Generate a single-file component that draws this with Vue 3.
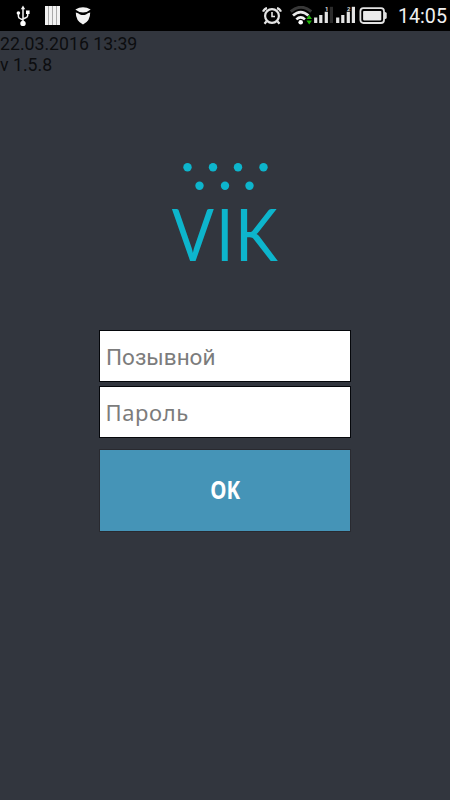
<script setup>
import { ref } from 'vue'

const callsign = ref('')
const password = ref('')
const topDots = [187.5, 213, 238, 263.5]
const bottomDots = [199.5, 225, 249.5]
const signals = [{ id: '1', dim: true }, { id: '2', dim: false }]
</script>

<template>
  <div class="screen">
    <header class="status">
      <svg class="usb" width="14" height="22" viewBox="0 0 14 22" fill="none" stroke="#f2f2f2" stroke-width="1.5">
        <path d="M7 3V18M2.4 9V11.2Q2.4 13 4.2 13.6L7 15M11.7 8V10.5Q11.7 12 9.8 12.8L7 14" />
        <path d="M7 .6L9.2 4.2H4.8Z" fill="#f2f2f2" stroke="none" />
        <circle cx="7" cy="18.4" r="2.7" fill="#fff" stroke="none" />
        <circle cx="2.4" cy="8" r="1.8" fill="#fff" stroke="none" />
        <rect x="10" y="5.5" width="3.6" height="3.5" fill="#fff" stroke="none" />
      </svg>
      <svg class="stripes" width="15" height="19" viewBox="0 0 15 19">
        <rect width="15" height="19" fill="#f2f2f2" />
        <path d="M3.5 0V19M7.5 0V19M11.5 0V19" stroke="#aaa" />
      </svg>
      <svg class="shield" width="16" height="18" viewBox="0 0 16 18" fill="#f2f2f2">
        <path d="M.3 2.6Q4 .3 8 .3T15.7 2.6Q13 5.2 8 5.5Q3 5.2 .3 2.6Z" />
        <path d="M.8 5.4Q3.3 6 5 7.4Q8 8.8 11 7.4Q12.7 6 15.2 5.4Q15.4 13.7 8 17.5Q.6 13.7 .8 5.4Z" />
      </svg>
      <span class="spacer"></span>
      <svg class="alarm" width="20" height="18" viewBox="0 0 20 18" fill="none" stroke="#e4e4e4">
        <circle cx="10" cy="9" r="6.9" stroke-width="2.2" />
        <path d="M10 5V9.5H13" stroke-width="1.6" />
        <path d="M1 4.7Q2.2 1.7 5 1.1M19 4.7Q17.8 1.7 15 1.1" stroke-width="2.2" />
        <path d="M4.6 14.2L2.5 16.8M15.4 14.2L17.5 16.8" stroke-width="2.2" />
      </svg>
      <svg class="wifi" width="22" height="19" viewBox="0 0 22 19" fill="none">
        <path d="M.8 5.6Q11 -3 21.2 5.6" stroke="#383838" stroke-width="3" />
        <path d="M3 9.5Q10.7 2.7 18.4 9.5" stroke="#e8e8e8" stroke-width="2.8" />
        <path d="M6.3 13.4Q10.7 9.4 15 13.4" stroke="#f2f2f2" stroke-width="2.5" />
        <circle cx="10.7" cy="16.2" r="2.3" fill="#fff" />
        <path d="M19.2 9L22 13H16.4ZM19.2 18.5L22 14.5H16.4Z" fill="#20b50a" />
      </svg>
      <svg v-for="s in signals" :key="s.id" class="signal" width="20" height="18" viewBox="0 0 20 18">
        <path d="M.1 11.4H3.3V17H.1ZM5.2 9H8.4V17H5.2ZM10.7 5.8H13.9V17H10.7Z" fill="#e4e4e4" />
        <rect x="15.8" y=".8" width="3.2" height="16.2" :class="s.dim ? 'bar-dim' : 'bar'" />
        <text x="10.9" y="4.8" class="sim">{{ s.id }}</text>
      </svg>
      <svg class="battery" width="28" height="18" viewBox="0 0 28 18">
        <rect x="1.4" y="1.2" width="23.6" height="14.8" rx="3" fill="none" stroke="#e2e2e2" stroke-width="1.8" />
        <rect x="4.1" y="4" width="18.2" height="9.4" rx=".8" fill="#eaeaea" />
        <path d="M25 5H26Q27.7 5 27.7 6.5V10.5Q27.7 12 26 12H25Z" fill="#e2e2e2" />
      </svg>
      <time class="clock">14:05</time>
    </header>

    <main>
      <div class="build">22.03.2016 13:39<br>v 1.5.8</div>
      <svg class="logo" width="130" height="125" viewBox="160 150 130 125" fill="#0db5cc">
        <circle v-for="x in topDots" :key="x" :cx="x" cy="167.3" r="4.2" />
        <circle v-for="x in bottomDots" :key="x" :cx="x" cy="185.7" r="4.2" />
        <g class="wordmark">
          <text transform="translate(171.8 260.8) scale(.86 1)">V</text>
          <text transform="translate(216.3 260.8) scale(.84 1)">I</text>
          <text transform="translate(235 260.8) scale(.89 1)">K</text>
        </g>
      </svg>
      <form class="login" @submit.prevent>
        <input v-model="callsign" class="field" type="text" placeholder="Позывной">
        <input v-model="password" class="field pass" type="password" placeholder="Пароль">
        <button class="submit" type="submit"><span class="label">OK</span></button>
      </form>
    </main>
  </div>
</template>

<style>
body { margin: 0; background: #32363e; }
</style>

<style scoped>
.screen { width: 450px; height: 800px; overflow: hidden; background: #32363e; font-family: Roboto, sans-serif; }
.status { display: flex; align-items: flex-start; box-sizing: border-box; height: 31px; background: #000; }
.status svg { flex: none; }
.usb { margin: 5px 0 0 16px; }
.stripes { margin: 6px 0 0 15px; }
.shield { margin: 7px 0 0 15px; }
.spacer { flex: 1; }
.alarm { margin: 7px 8px 0 0; }
.wifi { margin: 6px 2px 0 0; }
.signal { margin: 6px 2px 0 0; }
.signal + .battery { margin-left: 1px; }
.bar { fill: #e4e4e4; }
.bar-dim { fill: #2c2c2c; }
.sim { font: bold 6px Roboto, sans-serif; fill: #ddd; }
.battery { margin-top: 7px; }
.clock { width: 53px; margin: 5px 3px 0 7px; box-sizing: border-box; color: #f0f0f0; font-size: 19.7px; line-height: 24px; white-space: nowrap; text-align: right; }
main { display: flex; flex-direction: column; align-items: center; }
.build { align-self: stretch; padding-top: 3px; color: #0c0d0f; font-size: 17.7px; line-height: 20.6px; }
.logo { margin-top: 75px; overflow: visible; }
.wordmark { font-family: Lato, sans-serif; font-weight: 400; font-size: 72.5px; }
.login { display: flex; flex-direction: column; width: 252px; margin-top: 55px; }
.field { box-sizing: border-box; width: 252px; height: 52px; margin: 0 0 4px; padding: 2px 6px 0; border: 1px solid #05070b; border-radius: 0; outline: 0; background: #fff; color: #222; font: 22.5px Roboto, sans-serif; }
.field::placeholder { color: #7c7c7c; opacity: 1; }
.pass { padding: 0 5.5px; font: 22px "Noto Sans", sans-serif; letter-spacing: .6px; }
.submit { box-sizing: border-box; width: 252px; height: 83px; margin-top: 7px; padding: 0 0 4px; border: 1px solid #292a30; border-radius: 0; background: #4594b7; color: #fff; }
.label { display: inline-block; font: bold 25px/30px "Noto Sans", sans-serif; transform: scaleX(.82); }
</style>
